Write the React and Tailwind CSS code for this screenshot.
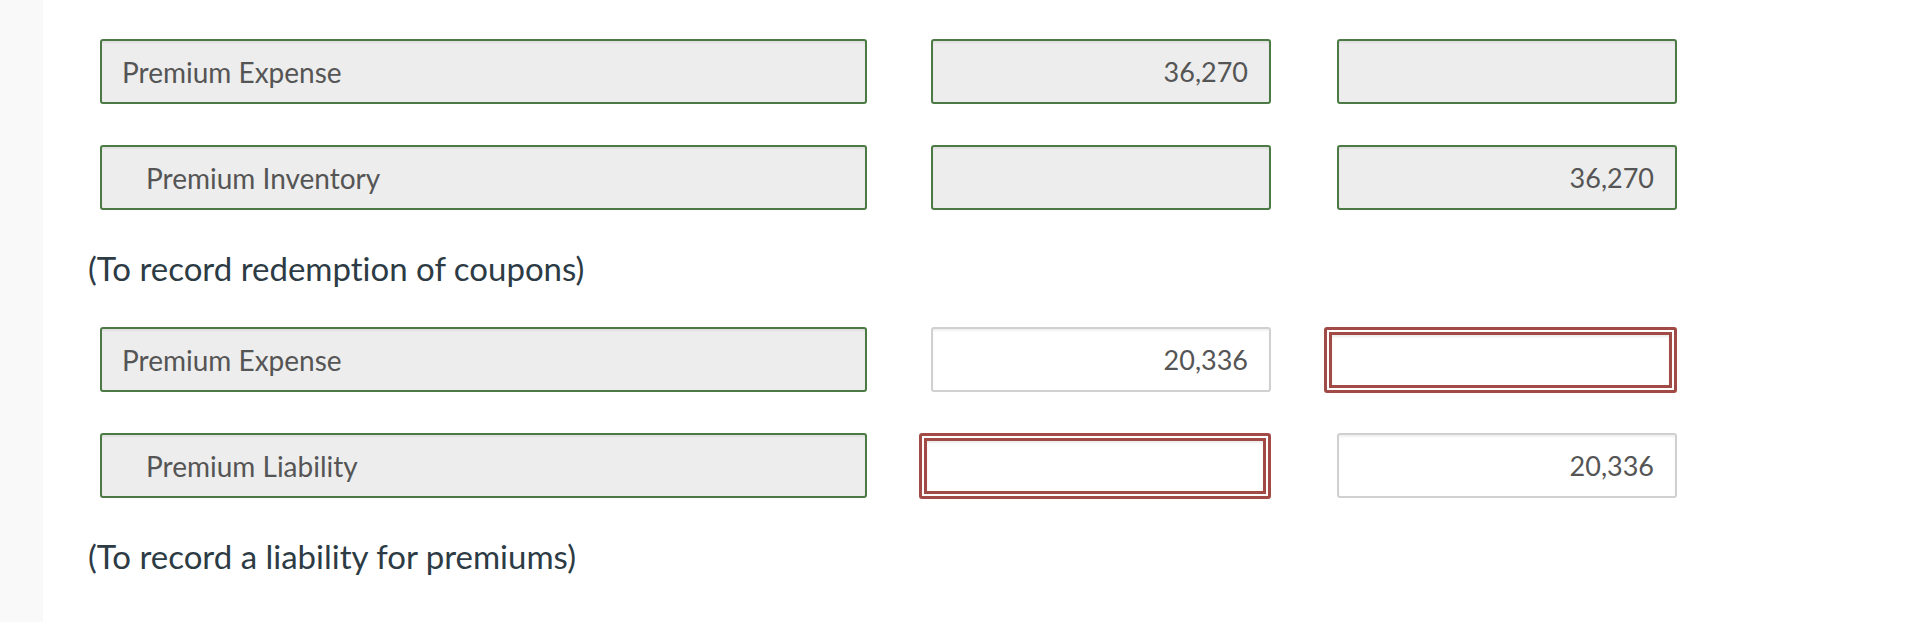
const rows = [
  { type: 'row', label: 'Premium Expense', indent: false, debit: { value: '36,270', state: 'locked' }, credit: { value: '', state: 'locked' } },
  { type: 'row', label: 'Premium Inventory', indent: true, debit: { value: '', state: 'locked' }, credit: { value: '36,270', state: 'locked' } },
  { type: 'note', text: '(To record redemption of coupons)' },
  { type: 'row', label: 'Premium Expense', indent: false, debit: { value: '20,336', state: 'open' }, credit: { value: '', state: 'error' } },
  { type: 'row', label: 'Premium Liability', indent: true, debit: { value: '', state: 'error' }, credit: { value: '20,336', state: 'open' } },
  { type: 'note', text: '(To record a liability for premiums)' },
]

function AmountCell({ value, state }) {
  if (state === 'error') {
    return (
      <div className="flex h-[66px] w-[353px] rounded-[3px] border-[3px] border-[#a14a46] bg-white p-[2px]">
        <div className="flex flex-1 items-center justify-end border-[3px] border-[#a14a46] bg-white px-5 text-[27px] text-[#555] shadow-[inset_0_2px_2px_rgba(0,0,0,0.08)]">
          {value}
        </div>
      </div>
    )
  }
  const tone =
    state === 'locked'
      ? 'border-2 border-[#4c7a44] bg-[#ededed]'
      : 'border-2 border-[#d0d0d0] bg-white'
  return (
    <div
      className={`flex h-[65px] w-[340px] items-center justify-end rounded-[3px] pr-[21px] pt-px text-[27px] text-[#555] shadow-[inset_0_2px_2px_rgba(0,0,0,0.06)] ${tone}`}
    >
      {value}
    </div>
  )
}

function EntryRow({ label, indent, debit, credit }) {
  return (
    <div className="flex h-[65px] items-start">
      <div
        className={`flex h-[65px] w-[767px] items-center rounded-[3px] border-2 border-[#4c7a44] bg-[#ededed] text-[28px] text-[#555] shadow-[inset_0_2px_2px_rgba(0,0,0,0.06)] ${
          indent ? 'pl-[44px]' : 'pl-5'
        }`}
      >
        {label}
      </div>
      <div className="ml-[52px] flex w-[352px] justify-end">
        <AmountCell {...debit} />
      </div>
      <div className="ml-[53px] flex w-[353px] justify-end">
        <AmountCell {...credit} />
      </div>
    </div>
  )
}

export default function App() {
  return (
    <div className="flex h-[622px] w-[1912px] bg-white font-['Lato','Noto_Sans',sans-serif] [font-variant-ligatures:none]">
      <div className="w-[43px] shrink-0 bg-[#f9f9f9]" />
      <div className="flex flex-col pt-[39px]">
        {rows.map((r, i) =>
          r.type === 'note' ? (
            <p key={i} className="ml-[45px] flex h-[117px] items-center text-[33px] text-[#2d3b45]">
              {r.text}
            </p>
          ) : (
            <div key={i} className={`ml-[57px] ${rows[i + 1]?.type === 'row' ? 'mb-[41px]' : ''}`}>
              <EntryRow {...r} />
            </div>
          )
        )}
      </div>
    </div>
  )
}
